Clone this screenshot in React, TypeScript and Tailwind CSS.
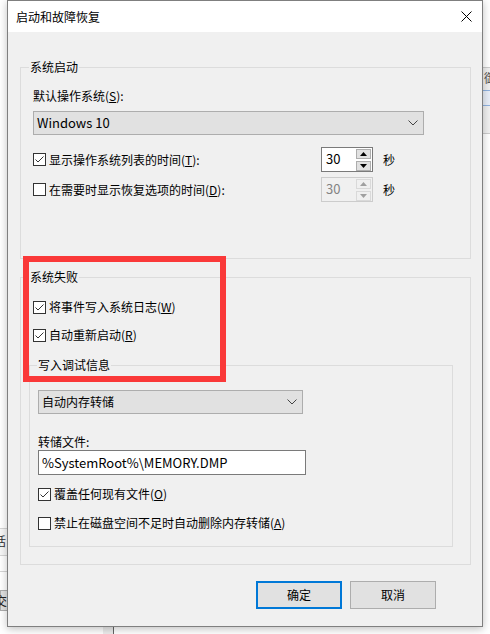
const FONT = { fontFamily: '"Noto Sans CJK SC", "Noto Sans", sans-serif' }

const Check = ({ checked }: { checked?: boolean }) => (
  <span className="flex h-[13px] w-[13px] shrink-0 items-center justify-center border border-[#333333] bg-white">
    {checked && (
      <svg width="11" height="11" viewBox="0 0 11 11">
        <path d="M1.5 5.5 L4 8 L9.5 2.5" stroke="#333333" strokeWidth="1" fill="none" />
      </svg>
    )}
  </span>
)

const CheckRow = ({ checked, children }: { checked?: boolean; children: React.ReactNode }) => (
  <div className="flex h-[16px] items-center gap-[3px]">
    <Check checked={checked} />
    <span className="leading-[16px]">{children}</span>
  </div>
)

const Chevron = () => (
  <svg width="10" height="6" viewBox="0 0 10 6">
    <path d="M0.5 0.5 L5 5 L9.5 0.5" stroke="#444" strokeWidth="1" fill="none" />
  </svg>
)

const Spinner = ({ disabled }: { disabled?: boolean }) => {
  const arrow = disabled ? '#a0a0a0' : '#000'
  return (
    <div
      className={
        'flex h-[25px] w-[52px] border ' +
        (disabled ? 'border-[#cccccc] bg-[#f0f0f0] text-[#838383]' : 'border-[#7a7a7a] bg-white text-black')
      }
    >
      <span className="flex-1 pl-[4px] text-[13px] leading-[22px]">30</span>
      <div className="flex flex-col justify-center gap-[2px] pr-[1px]">
        <span
          className={
            'flex h-[10px] w-[15px] items-center justify-center border ' +
            (disabled ? 'border-[#d9d9d9] bg-[#f0f0f0]' : 'border-[#adadad] bg-[#e1e1e1]')
          }
        >
          <svg width="7" height="4" viewBox="0 0 7 4">
            <polygon points="0,4 3.5,0 7,4" fill={arrow} />
          </svg>
        </span>
        <span
          className={
            'flex h-[10px] w-[15px] items-center justify-center border ' +
            (disabled ? 'border-[#d9d9d9] bg-[#f0f0f0]' : 'border-[#adadad] bg-[#e1e1e1]')
          }
        >
          <svg width="7" height="4" viewBox="0 0 7 4">
            <polygon points="0,0 3.5,4 7,0" fill={arrow} />
          </svg>
        </span>
      </div>
    </div>
  )
}

const Legend = ({ children, inset = 'ml-[8px]' }: { children: React.ReactNode; inset?: string }) => (
  <span className={'-mt-[9px] block w-fit bg-[#f0f0f0] px-[1px] leading-[16px] ' + inset}>{children}</span>
)

const App = () => {
  return (
    <div className="relative h-[634px] w-[490px] overflow-hidden bg-white text-[12px] text-black" style={FONT}>
      {/* background windows */}
      <div className="absolute left-[483px] top-[67px] h-[67px] w-[10px] border-y border-[#cccccc] bg-[#f0f0f0]">
        <span className="ml-[1px] mt-[3px] block text-[12px] leading-[14px] text-[#555]">御</span>
        <div className="mt-[5px] h-[16px] border-y border-[#8fb2e0] bg-[#e8eef8]" />
      </div>
      <div className="absolute left-0 top-[528px] h-[28px] w-[8px] border-y border-[#d5d5d5] bg-[#f7f7f7]">
        <span className="-ml-[6px] mt-[5px] block text-[12px] leading-[14px] text-[#333]">话</span>
      </div>
      <div className="absolute left-0 top-[571px] h-px w-[8px] bg-[#d5d5d5]" />
      <div className="absolute left-0 top-[590px] h-[21px] w-[8px] border border-[#adadad] bg-[#e1e1e1]">
        <span className="-ml-[6px] block text-[12px] leading-[19px] text-[#222]">交</span>
      </div>
      <div className="absolute left-[103px] top-[627px] h-[7px] w-[10px] bg-[#ececec]" />
      <div className="absolute left-[113px] top-[627px] h-[7px] w-px bg-[#666]" />

      {/* dialog */}
      <div className="absolute left-[7px] top-0 flex h-[627px] w-[476px] flex-col border border-[#7f7f7f] bg-[#f0f0f0] shadow-[0_2px_8px_rgba(0,0,0,0.25)]">
        <div className="flex h-[31px] shrink-0 items-center justify-between bg-white pl-[8px] pr-[10px]">
          <span className="leading-[16px]">启动和故障恢复</span>
          <svg width="11" height="11" viewBox="0 0 11 11">
            <path d="M0.5 0.5 L10.5 10.5 M10.5 0.5 L0.5 10.5" stroke="#000" strokeWidth="1" />
          </svg>
        </div>

        <div className="pl-[12px]">
          {/* 系统启动 */}
          <div className="mt-[35px] h-[192px] w-[451px] border border-[#dcdcdc]">
            <Legend>系统启动</Legend>
            <div className="pl-[12px]">
              <p className="mt-[13px] leading-[16px]">
                默认操作系统(<u>S</u>):
              </p>
              <div className="mt-[7px] flex h-[24px] w-[391px] items-center justify-between border border-[#adadad] bg-[#e1e1e1] pl-[3px] pr-[5px]">
                <span className="text-[13px]">Windows 10</span>
                <Chevron />
              </div>
              <div className="mt-[12px] flex h-[25px] items-center">
                <div className="w-[288px]">
                  <CheckRow checked>
                    显示操作系统列表的时间(<u>T</u>):
                  </CheckRow>
                </div>
                <Spinner />
                <span className="ml-[10px]">秒</span>
              </div>
              <div className="mt-[5px] flex h-[25px] items-center">
                <div className="w-[288px]">
                  <CheckRow>
                    在需要时显示恢复选项的时间(<u>D</u>):
                  </CheckRow>
                </div>
                <Spinner disabled />
                <span className="ml-[10px]">秒</span>
              </div>
            </div>
          </div>

          {/* 系统失败 */}
          <div className="mt-[18px] h-[288px] w-[451px] border border-[#dcdcdc]">
            <Legend>系统失败</Legend>
            <div className="pl-[12px]">
              <div className="mt-[14px]">
                <CheckRow checked>
                  将事件写入系统日志(<u>W</u>)
                </CheckRow>
              </div>
              <div className="mt-[12px]">
                <CheckRow checked>
                  自动重新启动(<u>R</u>)
                </CheckRow>
              </div>
            </div>

            <div className="ml-[8px] mt-[22px] h-[182px] w-[424px] border border-[#dcdcdc]">
              <Legend inset="ml-[7px]">写入调试信息</Legend>
              <div className="pl-[8px]">
                <div className="mt-[17px] flex h-[24px] w-[265px] items-center justify-between border border-[#adadad] bg-[#e1e1e1] pl-[3px] pr-[5px]">
                  <span>自动内存转储</span>
                  <Chevron />
                </div>
                <p className="mt-[20px] leading-[16px]">转储文件:</p>
                <div className="flex h-[25px] w-[268px] items-center border border-[#7a7a7a] bg-white pl-[3px]">
                  <span className="text-[13px]">%SystemRoot%\MEMORY.DMP</span>
                </div>
                <div className="mt-[11px]">
                  <CheckRow checked>
                    覆盖任何现有文件(<u>O</u>)
                  </CheckRow>
                </div>
                <div className="mt-[13px]">
                  <CheckRow>
                    禁止在磁盘空间不足时自动删除内存转储(<u>A</u>)
                  </CheckRow>
                </div>
              </div>
            </div>
          </div>
        </div>

        <div className="mt-[16px] flex gap-[8px] pl-[248px]">
          <button className="h-[28px] w-[86px] border-2 border-[#0078d7] bg-[#e1e1e1] leading-[24px]">确定</button>
          <button className="h-[28px] w-[86px] border border-[#adadad] bg-[#e1e1e1] leading-[26px]">取消</button>
        </div>
      </div>

      {/* annotation */}
      <div className="absolute left-[23px] top-[256px] h-[126px] w-[203px] border-[6px] border-[#fa3939]" />
    </div>
  )
}

export default App
